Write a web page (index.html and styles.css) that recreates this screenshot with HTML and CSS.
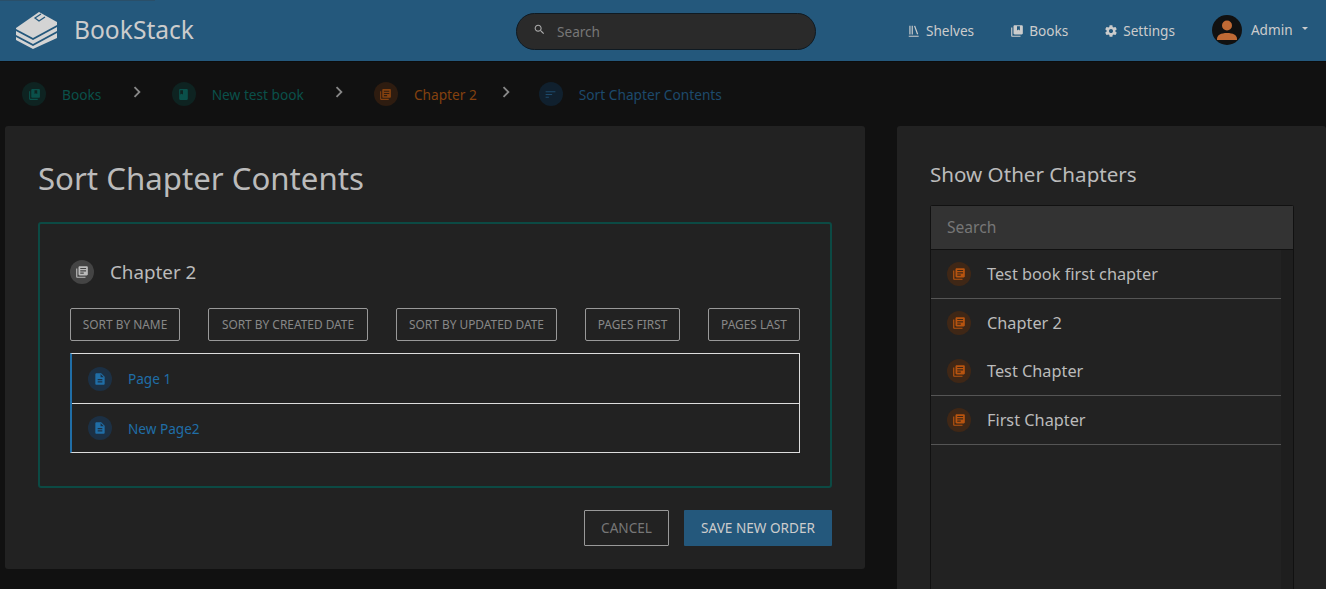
FILE: index.html
```html
<!DOCTYPE html>
<html lang="en">
<head>
<meta charset="utf-8">
<title>Sort Chapter Contents | BookStack</title>
<link rel="stylesheet" href="styles.css">
</head>
<body>
<svg class="sprite" aria-hidden="true">
  <symbol id="i-book" viewBox="0 0 24 24"><path d="M18 2H6c-1.1 0-2 .9-2 2v16c0 1.1.9 2 2 2h12c1.1 0 2-.9 2-2V4c0-1.1-.9-2-2-2zM6 4h5v8l-2.500-1.500L6 12V4z"/></symbol>
  <symbol id="i-books" viewBox="0 0 24 24"><path d="M4 6H2v14c0 1.100.9 2 2 2h14v-2H4V6zm16-4H8c-1.100 0-2 .9-2 2v12c0 1.100.9 2 2 2h12c1.100 0 2-.9 2-2V4c0-1.100-.9-2-2-2zm-8 2h5v7l-2.500-1.500L12 11V4z" fill-rule="evenodd"/></symbol>
  <symbol id="i-chapter" viewBox="0 0 24 24"><path d="M4 6H2v14c0 1.100.9 2 2 2h14v-2H4V6zm16-4H8c-1.100 0-2 .9-2 2v12c0 1.100.9 2 2 2h12c1.100 0 2-.9 2-2V4c0-1.100-.9-2-2-2zm-1 9H9V9h10v2zm-4 4H9v-2h6v2zm4-8H9V5h10v2z"/></symbol>
  <symbol id="i-page" viewBox="0 0 24 24"><path d="M14 2H6c-1.100 0-1.990.9-1.990 2L4 20c0 1.100.89 2 1.990 2H18c1.100 0 2-.9 2-2V8l-6-6zm2 16H8v-2h8v2zm0-4H8v-2h8v2zm-3-5V3.500L18.500 9H13z"/></symbol>
  <symbol id="i-sort" viewBox="0 0 24 24"><path d="M3 18h6v-2H3v2zM3 6v2h18V6H3zm0 7h12v-2H3v2z"/></symbol>
  <symbol id="i-search" viewBox="0 0 24 24"><path d="M15.500 14h-.79l-.28-.27C15.410 12.590 16 11.110 16 9.500 16 5.910 13.090 3 9.500 3S3 5.910 3 9.500 5.910 16 9.500 16c1.610 0 3.090-.59 4.230-1.570l.27.28v.79l5 4.990L20.490 19l-4.990-5zm-6 0C7.010 14 5 11.990 5 9.500S7.010 5 9.500 5 14 7.010 14 9.500 11.990 14 9.500 14z"/></symbol>
  <symbol id="i-gear" viewBox="0 0 24 24"><path d="M19.430 12.980c.04-.32.07-.64.07-.98s-.03-.66-.07-.98l2.110-1.650c.19-.15.24-.42.12-.64l-2-3.460c-.12-.22-.39-.3-.61-.22l-2.490 1c-.52-.4-1.080-.73-1.690-.98l-.38-2.650C14.460 2.180 14.250 2 14 2h-4c-.25 0-.46.18-.49.42l-.38 2.650c-.61.25-1.170.59-1.690.98l-2.490-1c-.23-.09-.49 0-.61.22l-2 3.460c-.13.22-.07.49.12.64l2.110 1.650c-.04.32-.07.65-.07.98s.03.66.07.98l-2.110 1.650c-.19.15-.24.42-.12.64l2 3.460c.12.22.39.3.61.22l2.490-1c.52.4 1.080.73 1.690.98l.38 2.650c.03.24.24.42.49.42h4c.25 0 .46-.18.49-.42l.38-2.650c.61-.25 1.170-.59 1.690-.98l2.490 1c.23.09.49 0 .61-.22l2-3.460c.12-.22.07-.49-.12-.64l-2.110-1.650zM12 15.500c-1.930 0-3.500-1.570-3.500-3.500s1.570-3.500 3.500-3.500 3.500 1.570 3.500 3.500-1.570 3.500-3.500 3.500z"/></symbol>
  <symbol id="i-shelves" viewBox="0 0 24 24"><path d="M3 20h17v2H3zM4 3h2v15H4zM8 3h2v15H8zM12 3.500l2-.7 5.200 14.500-2 .7z"/></symbol>
  <symbol id="i-chevron" viewBox="0 0 24 24"><path d="M10 6L8.590 7.410 13.170 12l-4.580 4.590L10 18l6-6z"/></symbol>
</svg>

<header class="topbar">
  <span class="load-strip"></span>
  <a class="logo" href="#">
    <svg class="logo-mark" viewBox="0 0 41 37">
      <path class="logo-fill" d="M0 16 L23 0 L41 10 L41 13 L17 26 L0 17Z"/>
      <path class="logo-cut" d="M25 2 L19 6 L23 9 L29 5"/>
      <path class="logo-fill" d="M0 19 L17 28 L41 15 L41 19 L17 32 L0 23Z"/>
      <path class="logo-fill" d="M0 25 L17 34 L41 21 L41 26 L17 37 L0 28Z"/>
    </svg>
    <span class="logo-text">BookStack</span>
  </a>
  <div class="global-search">
    <svg class="search-ico"><use href="#i-search"/></svg>
    <span class="search-text">Search</span>
  </div>
  <nav class="topnav">
    <a class="nav-link" href="#"><svg class="nav-ico"><use href="#i-shelves"/></svg>Shelves</a>
    <a class="nav-link" href="#"><svg class="nav-ico"><use href="#i-books"/></svg>Books</a>
    <a class="nav-link" href="#"><svg class="nav-ico"><use href="#i-gear"/></svg>Settings</a>
    <a class="user" href="#">
      <svg class="avatar" viewBox="0 0 30 30"><circle cx="15" cy="15" r="15" fill="#111"/><circle cx="15" cy="10.500" r="5" fill="#c06a35"/><path d="M5 24c0-4 4-6 10-6s10 2 10 6v1H5z" fill="#c06a35"/></svg>
      <span class="user-name">Admin</span>
      <span class="caret"></span>
    </a>
  </nav>
</header>

<div class="crumbs">
  <a class="crumb book" href="#"><span class="disc"><svg><use href="#i-books"/></svg></span>Books</a>
  <span class="sep first"><svg><use href="#i-chevron"/></svg></span>
  <a class="crumb book" href="#"><span class="disc"><svg><use href="#i-book"/></svg></span>New test book</a>
  <span class="sep"><svg><use href="#i-chevron"/></svg></span>
  <a class="crumb chapter" href="#"><span class="disc"><svg><use href="#i-chapter"/></svg></span>Chapter 2</a>
  <span class="sep narrow"><svg><use href="#i-chevron"/></svg></span>
  <a class="crumb sort" href="#"><span class="disc"><svg><use href="#i-sort"/></svg></span>Sort Chapter Contents</a>
</div>

<main class="layout">
  <section class="card main-card">
    <h1 class="title">Sort Chapter Contents</h1>
    <div class="sort-box">
      <h2 class="sort-head"><span class="disc grey"><svg><use href="#i-chapter"/></svg></span>Chapter 2</h2>
      <div class="sort-buttons">
        <button class="mini">Sort by Name</button>
        <button class="mini">Sort by Created Date</button>
        <button class="mini">Sort by Updated Date</button>
        <button class="mini">Pages First</button>
        <button class="mini">Pages Last</button>
      </div>
      <ul class="pages">
        <li class="page-row"><span class="disc page"><svg><use href="#i-page"/></svg></span>Page 1</li>
        <li class="page-row"><span class="disc page"><svg><use href="#i-page"/></svg></span>New Page2</li>
      </ul>
    </div>
    <div class="actions">
      <a class="btn outline" href="#">Cancel</a>
      <a class="btn solid" href="#">Save New Order</a>
    </div>
  </section>

  <aside class="card side-card">
    <h3 class="side-title">Show Other Chapters</h3>
    <div class="selector">
      <div class="selector-search">Search</div>
      <div class="selector-body">
        <ul class="chapters">
          <li class="chapter-row ruled"><span class="disc chap"><svg><use href="#i-chapter"/></svg></span>Test book first chapter</li>
          <li class="chapter-row"><span class="disc chap"><svg><use href="#i-chapter"/></svg></span>Chapter 2</li>
          <li class="chapter-row ruled"><span class="disc chap"><svg><use href="#i-chapter"/></svg></span>Test Chapter</li>
          <li class="chapter-row ruled"><span class="disc chap"><svg><use href="#i-chapter"/></svg></span>First Chapter</li>
        </ul>
      </div>
    </div>
  </aside>
</main>
</body>
</html>
```
FILE: styles.css
```css
* { box-sizing: border-box; }
html, body { height: 589px; overflow: hidden; }
body {
  margin: 0;
  background: #111;
  color: #aaa;
  font-family: "Noto Sans", "Open Sans", sans-serif;
  font-size: 14px;
}
a { color: inherit; text-decoration: none; }
ul { list-style: none; margin: 0; padding: 0; }
svg { fill: currentColor; display: block; }
.sprite { display: none; }

.topbar {
  position: relative;
  height: 62px;
  background: #24587c;
  border-bottom: 1px solid #0c0c0c;
  display: flex;
  align-items: center;
  padding: 0 0 1px 16px;
  color: #ccc;
  font-size: 13.600px;
}
.load-strip {
  position: absolute;
  top: 0;
  left: 0;
  width: 155px;
  height: 1px;
  background: #2a4f69;
}
.logo { display: flex; align-items: center; width: 500px; gap: 17px; }
.logo-mark { width: 41px; height: 37px; }
.logo-fill { fill: #d4d4d4; }
.logo-cut { fill: none; stroke: #24587c; stroke-width: 1.300; }
.logo-text { font-size: 24.600px; color: #ccc; padding-bottom: 2px; }

.global-search {
  width: 300px;
  height: 37px;
  margin-top: 3px;
  border-radius: 19px;
  background: #2a2a2a;
  border: 1px solid #0f1a22;
  display: flex;
  align-items: center;
  padding-left: 16px;
  color: #777;
}
.search-ico { width: 13px; height: 13px; color: #aaa; margin-top: -4px; }
.search-text { margin-left: 11px; }

.topnav { display: flex; align-items: center; margin-left: 91px; }
.nav-link { display: flex; align-items: center; gap: 5px; margin: 1px 36px 0 0; }
.nav-ico { width: 14px; height: 14px; }
.user { display: flex; align-items: center; margin-left: 1px; }
.avatar { width: 30px; height: 30px; margin-right: 9px; }
.user-name { margin-bottom: 2px; }
.caret {
  margin-left: 9px;
  margin-top: -3px;
  border: 3px solid transparent;
  border-top-color: #ccc;
  border-bottom-width: 0;
}

.crumbs {
  height: 64px;
  display: flex;
  align-items: center;
  padding-left: 22px;
  font-size: 13.700px;
}
.crumb { display: flex; align-items: center; gap: 16px; }
.disc {
  width: 24px;
  height: 24px;
  border-radius: 50%;
  flex: none;
  display: flex;
  align-items: center;
  justify-content: center;
}
.disc svg { width: 14px; height: 14px; }
.crumb .disc svg { width: 13px; height: 13px; }
.crumb.book { color: #0a504a; }
.crumb.book .disc { background: #0e2321; }
.crumb.chapter { color: #84410f; }
.crumb.chapter .disc { background: #2e1c10; }
.crumb.sort { color: #1d4a6c; }
.crumb.sort .disc { background: #10202e; }
.sep { color: #888; width: 70px; display: flex; justify-content: center; margin-top: -4px; }
.sep.first { width: 70.400px; }
.sep.narrow { width: 58px; margin-right: 4px; }
.sep svg { width: 22px; height: 22px; }

.layout {
  display: grid;
  grid-template-columns: 860px 429px;
  column-gap: 32px;
  padding-left: 5px;
  align-items: start;
}
.card { background: #222; border-radius: 3px; }
.main-card { height: 443px; padding: 33px 33px 0; }
.side-card {
  height: 463px;
  padding: 32px 33px 0;
  border-radius: 3px 3px 0 0;
  display: flex;
  flex-direction: column;
}
.title {
  margin: 0 0 24px;
  font-size: 31.200px;
  line-height: 39px;
  font-weight: 400;
  color: #bbb;
}
.sort-box {
  width: 794px;
  height: 266px;
  border: 2px solid #0c4a44;
  border-radius: 3px;
  padding: 35px 30px 0;
}
.sort-head {
  margin: 0 0 23px;
  display: flex;
  align-items: center;
  gap: 16px;
  font-size: 18.800px;
  font-weight: 400;
  color: #bbb;
  height: 26px;
}
.disc.grey { background: #444; color: #bbb; }
.sort-buttons { display: flex; gap: 28px; margin-bottom: 12px; }
.mini {
  height: 33px;
  flex: none;
  padding: 0 0 2px;
  background: transparent;
  border: 1px solid #999;
  border-radius: 2px;
  color: #888;
  font: inherit;
  font-size: 11.900px;
  text-transform: uppercase;
}
.mini:nth-child(1) { width: 110px; }
.mini:nth-child(2) { width: 160px; }
.mini:nth-child(3) { width: 161px; }
.mini:nth-child(4) { width: 95px; }
.mini:nth-child(5) { width: 92px; }
.pages { border: 1px solid #ddd; border-left: 2px solid #206ea7; }
.page-row {
  height: 49px;
  display: flex;
  align-items: center;
  gap: 16px;
  padding-left: 16px;
  font-size: 13.600px;
  color: #206ea7;
}
.page-row + .page-row { border-top: 1px solid #ddd; }
.disc.page { background: #1c3044; }
.actions { display: flex; justify-content: flex-end; gap: 15px; margin-top: 22px; width: 794px; }
.btn {
  height: 36px;
  padding-bottom: 2px;
  display: flex;
  align-items: center;
  justify-content: center;
  text-transform: uppercase;
  font-size: 13.600px;
  border-radius: 1px;
}
.btn.outline { width: 85px; border: 1px solid #999; color: #777; }
.btn.solid { width: 148px; background: #24587c; color: #ccc; }

.side-title {
  margin: 0 0 15px;
  font-size: 20.600px;
  line-height: 32px;
  font-weight: 400;
  color: #bbb;
}
.selector {
  width: 364px;
  flex: 1;
  min-height: 0;
  display: flex;
  flex-direction: column;
  border: 1px solid #111;
  border-bottom: 0;
  border-radius: 3px 3px 0 0;
}
.selector-search {
  height: 44px;
  flex: none;
  padding: 0 0 2px 16px;
  background: #333;
  border-bottom: 1px solid #111;
  color: #777;
  font-size: 15.600px;
  display: flex;
  align-items: center;
}
.selector-body { flex: 1; background: #1e1e1e; padding-right: 12px; }
.chapters { background: #222; height: 100%; }
.chapter-row {
  height: 48px;
  display: flex;
  align-items: center;
  gap: 16px;
  padding-left: 16px;
  font-size: 16.300px;
  color: #bbb;
}
.chapter-row.ruled { height: 49px; border-bottom: 1px solid #555; }
.disc.chap { background: #3f2716; color: #b8540f; }
```
